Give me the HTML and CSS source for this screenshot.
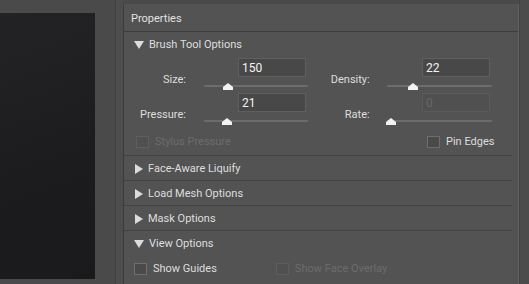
FILE: index.html
```html
<!DOCTYPE html>
<html lang="en">
<head>
    <meta charset="UTF-8">
    <title>Liquify - Properties</title>
    <link rel="stylesheet" href="styles.css">
</head>
<body>
    <div class="doc">
        <div class="canvas"></div>
    </div>
    <div class="gutter"></div>

    <div class="panel">
        <div class="panel-head">Properties</div>

        <div class="section">
            <div class="section-title"><span class="tri down"></span>Brush Tool Options</div>
            <div class="brush">
                <div class="field">
                    <div class="label">Size:</div>
                    <div class="ctrl">
                        <div class="num">150</div>
                        <div class="slider"><svg class="thumb" style="left: 19px" width="10" height="7" viewBox="0 0 10 7"><polygon points="5,0 10,4 10,7 0,7 0,4" fill="#f2f2f2"/></svg></div>
                    </div>
                </div>
                <div class="field">
                    <div class="label">Density:</div>
                    <div class="ctrl">
                        <div class="num">22</div>
                        <div class="slider"><svg class="thumb" style="left: 21px" width="10" height="7" viewBox="0 0 10 7"><polygon points="5,0 10,4 10,7 0,7 0,4" fill="#f2f2f2"/></svg></div>
                    </div>
                </div>
                <div class="field">
                    <div class="label">Pressure:</div>
                    <div class="ctrl">
                        <div class="num">21</div>
                        <div class="slider"><svg class="thumb" style="left: 18px" width="10" height="7" viewBox="0 0 10 7"><polygon points="5,0 10,4 10,7 0,7 0,4" fill="#f2f2f2"/></svg></div>
                    </div>
                </div>
                <div class="field">
                    <div class="label">Rate:</div>
                    <div class="ctrl">
                        <div class="num off">0</div>
                        <div class="slider"><svg class="thumb" style="left: -1px" width="10" height="7" viewBox="0 0 10 7"><polygon points="5,0 10,4 10,7 0,7 0,4" fill="#f2f2f2"/></svg></div>
                    </div>
                </div>
            </div>
            <div class="checks brush-checks">
                <label class="check off"><span class="box"></span>Stylus Pressure</label>
                <label class="check"><span class="box"></span>Pin Edges</label>
            </div>
        </div>

        <div class="section">
            <div class="section-title"><span class="tri right"></span>Face-Aware Liquify</div>
        </div>
        <div class="section">
            <div class="section-title"><span class="tri right"></span>Load Mesh Options</div>
        </div>
        <div class="section">
            <div class="section-title"><span class="tri right"></span>Mask Options</div>
        </div>

        <div class="section last">
            <div class="section-title"><span class="tri down"></span>View Options</div>
            <div class="checks view-checks">
                <label class="check"><span class="box"></span>Show Guides</label>
                <label class="check off"><span class="box"></span>Show Face Overlay</label>
            </div>
        </div>
    </div>

    <div class="edge"></div>
</body>
</html>
```

FILE: styles.css
```css
body {
    margin: 0;
    width: 529px;
    height: 284px;
    overflow: hidden;
    display: flex;
    background: #4a4a4a;
    font-family: Roboto, "Liberation Sans", sans-serif;
    font-size: 11px;
    color: #dedede;
}

.doc {
    width: 115px;
}

.canvas {
    margin-top: 13px;
    width: 95px;
    height: 266px;
    background: linear-gradient(160deg, #232325 0%, #1c1c1e 60%, #1a1a1c 100%);
}

.gutter {
    width: 7px;
    border-left: 1px solid #404040;
    background: #4d4d4d;
}

.panel {
    width: 394px;
    margin-top: 4px;
    border-left: 1px solid #3b3b3b;
    border-right: 1px solid #5f5f5f;
    background: #535353;
    display: flex;
    flex-direction: column;
}

.panel-head {
    height: 27px;
    line-height: 29px;
    padding-left: 7px;
    border-bottom: 1px solid #3d3d3d;
    color: #e2e2e2;
}

.section {
    margin-right: 6px;
    border-bottom: 1px solid #434343;
}

.section.last {
    border-bottom: none;
}

.section-title {
    height: 24px;
    display: flex;
    align-items: center;
    padding-left: 10px;
    padding-top: 1px;
    box-sizing: border-box;
}

.tri {
    width: 0;
    height: 0;
    margin-right: 5px;
}

.tri.down {
    border-left: 5px solid transparent;
    border-right: 5px solid transparent;
    border-top: 8px solid #dcdcdc;
}

.tri.right {
    margin-left: 1px;
    border-top: 5px solid transparent;
    border-bottom: 5px solid transparent;
    border-left: 8px solid #dcdcdc;
    margin-right: 5px;
}

.brush {
    display: grid;
    grid-template-columns: 184px 184px;
    padding-top: 2px;
}

.field {
    display: flex;
    height: 35px;
}

.label {
    width: 62px;
    padding-top: 15px;
    line-height: 14px;
    text-align: right;
}

.ctrl {
    margin-left: 18px;
    width: 104px;
    display: flex;
    flex-direction: column;
    align-items: flex-end;
}

.field:nth-child(2n) .label {
    width: 46px;
}

.field:nth-child(2n) .ctrl {
    margin-left: 17px;
    width: 106px;
}

.brush .field:nth-child(2n) {
    margin-left: 16px;
}

.num {
    box-sizing: border-box;
    width: 68px;
    height: 19px;
    margin-right: 2px;
    padding-left: 3px;
    line-height: 18px;
    background: #484848;
    border: 1px solid #5f5f5f;
    color: #f2f2f2;
    font-size: 12px;
}

.num.off {
    background: #505050;
    border-color: #5a5a5a;
    color: #686868;
}

.slider {
    position: relative;
    width: 100%;
    height: 16px;
}

.slider::before {
    content: "";
    position: absolute;
    left: 0;
    right: 0;
    top: 8px;
    height: 2px;
    border-radius: 1px;
    background: #6c6c6c;
}

.thumb {
    position: absolute;
    top: 6px;
}

.checks {
    display: grid;
    align-items: center;
}

.brush-checks {
    height: 27px;
    padding-left: 12px;
    grid-template-columns: 291px auto;
}

.view-checks {
    height: 27px;
    padding-left: 10px;
    grid-template-columns: 142px auto;
}

.check {
    display: flex;
    align-items: center;
}

.box {
    box-sizing: border-box;
    width: 13px;
    height: 12px;
    margin-right: 6px;
    border: 1px solid #6e6e6e;
    background: #4a4a4a;
}

.check.off {
    color: #6c6c6c;
}

.check.off .box {
    border-color: #5e5e5e;
    background: #505050;
}

.edge {
    flex: 1;
    border-left: 1px solid #444444;
    background: #4c4c4c;
}
```
